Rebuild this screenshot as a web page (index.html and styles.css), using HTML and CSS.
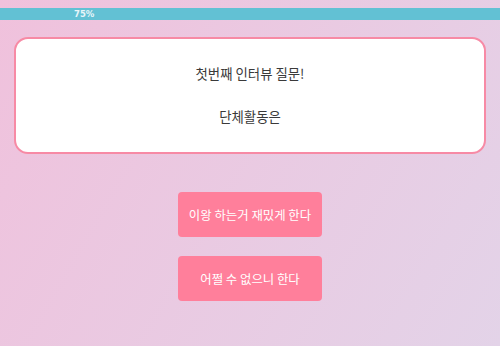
FILE: index.html
```html
<!DOCTYPE html>
<html>
<head>
	<title></title>
	<link rel="stylesheet" href="styles.css">
</head>
<body>
<div class="progress"><span class="progress-label">75%</span></div>
<div class="card">
	<p class="question">첫번째 인터뷰 질문!</p>
	<p class="question">단체활동은</p>
</div>
<div class="answers">
	<a href="javascript:;" class="answer">이왕 하는거 재밌게 한다</a>
	<a href="javascript:;" class="answer">어쩔 수 없으니 한다</a>
</div>
</body>
</html>
```

FILE: styles.css
```css
*{margin: 0;padding: 0;text-decoration: none;box-sizing: border-box;}
html,body{height: 100%;}
body{font-family: "Noto Sans CJK KR", "Noto Sans", sans-serif;background: linear-gradient(120deg, #f0c1dc 0%, #e3d3e8 100%);overflow: hidden;}
.progress{margin-top: 8px;height: 12px;background: #62c1d4;display: flex;align-items: center;}
.progress-label{font-family: "DejaVu Sans", sans-serif;font-size: 8.5px;font-weight: bold;color: #e8f6fa;margin-left: 74px;line-height: 12px;}
.card{margin: 17px 14px 0;height: 117px;border: 2px solid #f78aa5;border-radius: 14px;background: #fff;padding-top: 24px;text-align: center;display: flex;flex-direction: column;gap: 23px;}
.question{font-size: 13.4px;line-height: 20px;color: #3a3a3a;}
.answers{margin-top: 38px;display: flex;flex-direction: column;align-items: center;gap: 19px;}
.answer{display: flex;align-items: center;justify-content: center;width: 144px;height: 45px;background: #ff7f9b;border-radius: 4px;color: #fff;font-size: 12.4px;}
```
